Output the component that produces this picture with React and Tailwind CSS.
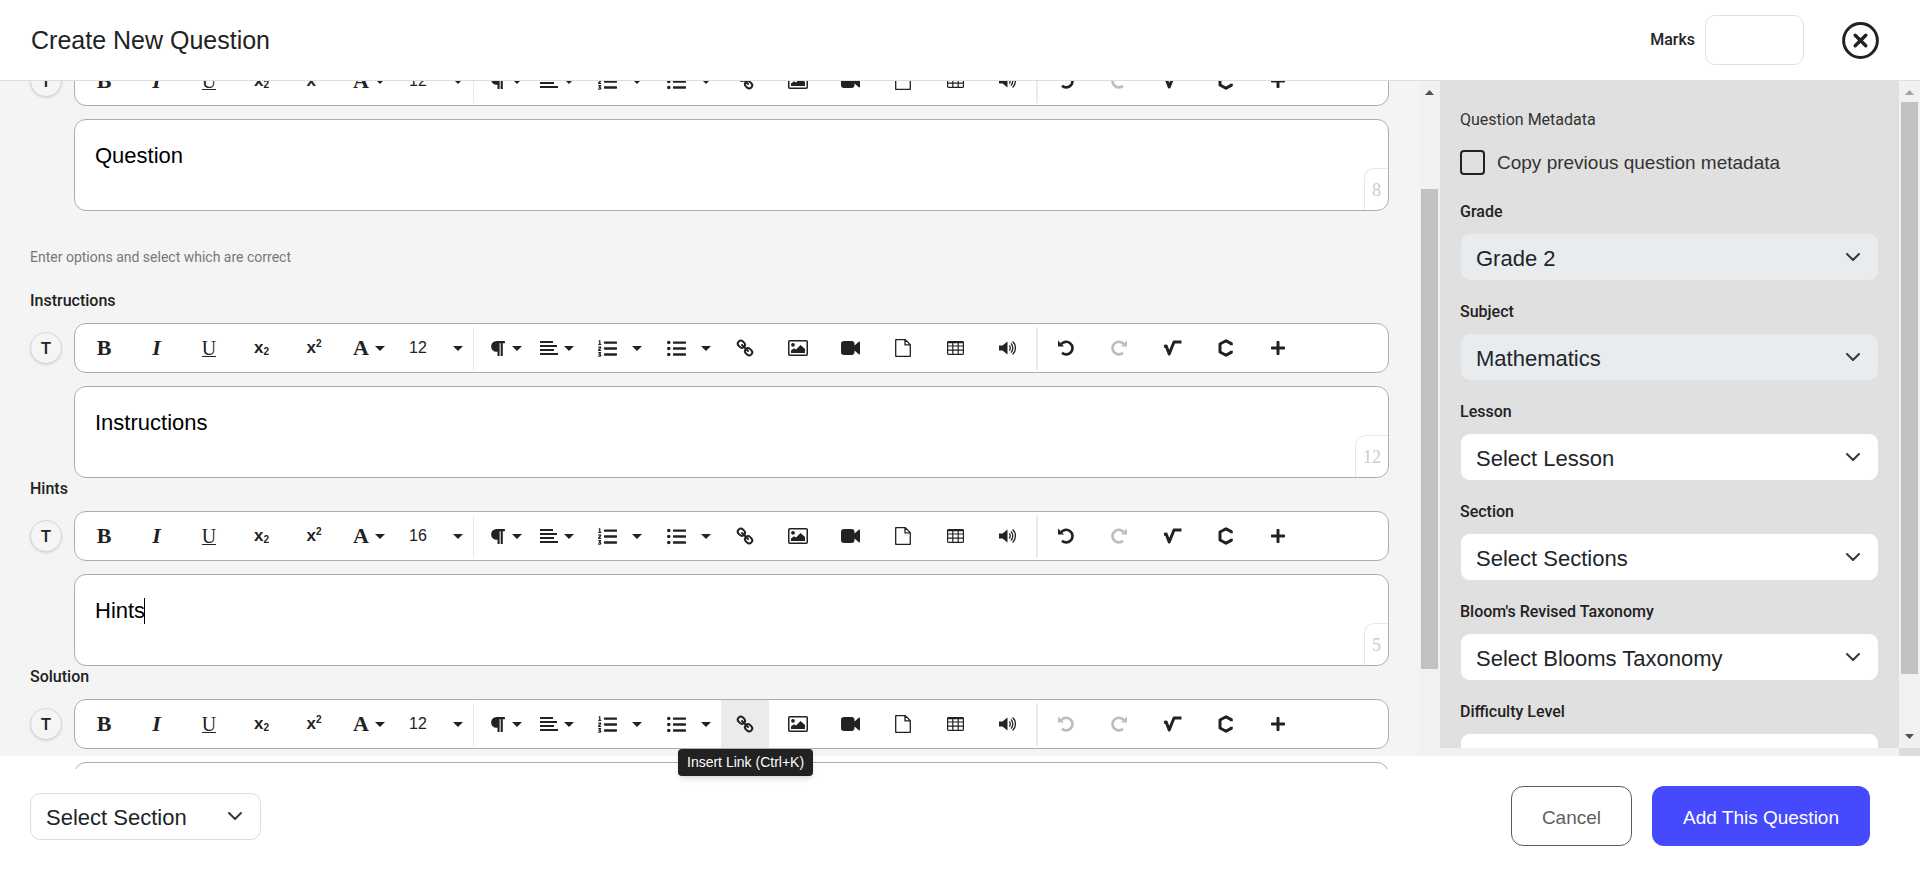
import { useId } from "react";
import { FaParagraph, FaListOl, FaListUl, FaPlus } from "react-icons/fa";

function Caret() {
  return (
    <svg className="h-[5px] w-[10px] shrink-0" viewBox="0 0 10 5" fill="currentColor" aria-hidden="true">
      <path d="M0 0h10L5 5z" />
    </svg>
  );
}

function AlignIcon() {
  return (
    <svg className="h-[14px] w-[18px]" viewBox="0 0 18 14" fill="none" stroke="currentColor" strokeWidth="2" aria-hidden="true">
      <path d="M0 1h13M0 5h17M0 9h14M0 13h18" />
    </svg>
  );
}

function LinkIcon() {
  return (
    <svg className="size-[18px]" viewBox="0 0 18 18" fill="none" stroke="currentColor" strokeWidth="2" aria-hidden="true">
      <rect x="1.6" y="2.2" width="7.6" height="6" rx="3" transform="rotate(45 5.4 5.2)" />
      <rect x="8.8" y="9.8" width="7.6" height="6" rx="3" transform="rotate(45 12.6 12.8)" />
      <path d="M6 6l6 6" strokeLinecap="round" />
    </svg>
  );
}

function ImageIcon() {
  return (
    <svg className="h-[16px] w-[20px]" viewBox="0 0 20 16" fill="currentColor" aria-hidden="true">
      <rect x="0.75" y="0.75" width="18.5" height="14.5" rx="1" fill="none" stroke="currentColor" strokeWidth="1.5" />
      <circle cx="5" cy="4.8" r="1.9" />
      <path d="M3 13v-2.400l3-2.400 2 1.400L12.500 5 17 9v4z" />
    </svg>
  );
}

function VideoIcon() {
  return (
    <svg className="h-[14px] w-[19px]" viewBox="0 0 19 14" fill="currentColor" aria-hidden="true">
      <path d="M3 0h7.500a3 3 0 0 1 3 3v1.600L17.800.8c.5-.4 1.200-.1 1.200.5v11.400c0 .6-.7.9-1.200.5l-4.300-3.800V11a3 3 0 0 1-3 3H3a3 3 0 0 1-3-3V3a3 3 0 0 1 3-3z" />
    </svg>
  );
}

function FileIcon() {
  return (
    <svg className="h-[18px] w-[16px]" viewBox="0 0 16 18" fill="none" stroke="currentColor" strokeWidth="1.300" strokeLinejoin="round" aria-hidden="true">
      <path d="M.7.7h9.600L15.300 5.600v11.700H.7zM10 .7v5.200h5.300" />
    </svg>
  );
}

function TableIcon() {
  return (
    <svg className="h-[14px] w-[17px]" viewBox="0 0 17 14" fill="none" stroke="currentColor" strokeWidth="1.200" aria-hidden="true">
      <rect x=".6" y=".6" width="15.800" height="12.800" rx="1" />
      <path d="M.6 1.200h15.800" strokeWidth="2" />
      <path d="M.6 5h15.800M.6 9.200h15.800M5.800 1v12.500M11.200 1v12.500" />
    </svg>
  );
}

function VolumeIcon() {
  return (
    <svg className="h-[16px] w-[18px]" viewBox="0 0 18 16" fill="currentColor" aria-hidden="true">
      <path d="M0 5.500h3.500L8.500 1.500v13l-5-4H0z" />
      <path d="M10.200 5.600a3.200 3.200 0 0 1 0 4.800M11.900 3.600a6 6 0 0 1 0 8.800M13.600 1.600a8.600 8.600 0 0 1 0 12.800" fill="none" stroke="currentColor" strokeWidth="1.300" />
    </svg>
  );
}

function UndoIcon() {
  return (
    <svg className="size-[16px]" viewBox="0 0 16 16" fill="none" aria-hidden="true">
      <path d="M3.200 4.200A6.300 6.300 0 1 1 4 12.800" stroke="currentColor" strokeWidth="2.700" />
      <path d="M0 .5v6h6z" fill="currentColor" />
    </svg>
  );
}

function RedoIcon() {
  return (
    <svg className="size-[16px]" viewBox="0 0 16 16" fill="none" aria-hidden="true">
      <path d="M12.800 4.200A6.300 6.300 0 1 0 12 12.800" stroke="currentColor" strokeWidth="2.700" />
      <path d="M16 .5v6h-6z" fill="currentColor" />
    </svg>
  );
}

function RootIcon() {
  return (
    <svg className="h-[16px] w-[19px]" viewBox="0 0 19 16" fill="none" stroke="currentColor" strokeWidth="3" strokeLinejoin="round" aria-hidden="true">
      <path d="M1 6.500l2.200-.5 3 8L11 2h7.500" />
    </svg>
  );
}

function ChemistryIcon() {
  return (
    <svg className="h-[18px] w-[15px]" viewBox="0 0 15 18" fill="none" stroke="currentColor" strokeWidth="3" strokeLinejoin="round" aria-hidden="true">
      <path d="M13.300 6.200V4.600L8 1.800 2 5v8l6 3.200 5.300-2.800v-1.600" />
    </svg>
  );
}

function Chevron({ className = "" }) {
  return (
    <svg className={`pointer-events-none absolute top-1/2 h-[8px] w-[14px] -translate-y-1/2 ${className}`} viewBox="0 0 14 8" fill="none" stroke="#343a40" strokeWidth="2" strokeLinecap="round" strokeLinejoin="round" aria-hidden="true">
      <path d="M1 1l6 6 6-6" />
    </svg>
  );
}

function ToolButton({ label, active, disabled, children }) {
  return (
    <button
      type="button"
      aria-label={label}
      disabled={disabled}
      className={`flex h-12 w-12 shrink-0 items-center justify-center ${active ? "bg-[#ebebeb]" : ""} ${disabled ? "text-[#bdbdbd]" : ""}`}
    >
      {children}
    </button>
  );
}

function MenuButton({ label, children }) {
  return (
    <button type="button" aria-label={label} aria-haspopup="menu" className="flex h-12 w-[52px] shrink-0 items-center justify-center gap-[6px]">
      {children}
      <Caret />
    </button>
  );
}

function ArrowButton({ label }) {
  return (
    <button type="button" aria-label={label} aria-haspopup="menu" className="flex h-12 w-3 shrink-0 items-center justify-center">
      <Caret />
    </button>
  );
}

function Toolbar({ size, linkActive, undoDisabled }) {
  return (
    <div role="toolbar" className="flex h-[50px] min-w-0 flex-1 items-center overflow-hidden rounded-xl border border-[#a8acb9] bg-white pl-[5px] text-[#222]">
      <div className="flex w-[258px] shrink-0 justify-between font-[Liberation_Serif,serif] text-[22px] leading-6">
        <ToolButton label="Bold"><b>B</b></ToolButton>
        <ToolButton label="Italic"><b><i>I</i></b></ToolButton>
        <ToolButton label="Underline">
          <span className="border-b border-current text-[20px] leading-4">U</span>
        </ToolButton>
        <ToolButton label="Subscript">
          <span className="font-[Liberation_Sans,sans-serif] text-[17px] font-bold">x</span>
          <span className="mt-2 font-[Liberation_Sans,sans-serif] text-[10px] leading-3 font-bold">2</span>
        </ToolButton>
        <ToolButton label="Superscript">
          <span className="font-[Liberation_Sans,sans-serif] text-[17px] font-bold">x</span>
          <span className="mb-2 font-[Liberation_Sans,sans-serif] text-[10px] leading-3 font-bold">2</span>
        </ToolButton>
      </div>
      <div className="mx-[5px]">
        <MenuButton label="Font"><b className="font-[Liberation_Serif,serif] text-[22px] leading-6">A</b></MenuButton>
      </div>
      <button type="button" aria-label="Font size" aria-haspopup="menu" className="flex h-12 w-[69px] shrink-0 items-center justify-between pr-[6px] pl-[9px] text-base">
        {size}
        <Caret />
      </button>
      <div className="ml-1 h-[43px] w-px shrink-0 bg-[#ebebeb]" />
      <div className="ml-[5px] flex">
        <MenuButton label="Paragraph format"><FaParagraph className="size-[17px]" /></MenuButton>
        <MenuButton label="Align"><AlignIcon /></MenuButton>
      </div>
      <div className="flex">
        <ToolButton label="Ordered list"><FaListOl className="size-[19px]" /></ToolButton>
        <ArrowButton label="Ordered list styles" />
      </div>
      <div className="ml-[9px] mr-[9px] flex">
        <ToolButton label="Unordered list"><FaListUl className="size-[19px]" /></ToolButton>
        <ArrowButton label="Unordered list styles" />
      </div>
      <div className="flex w-[311px] shrink-0 justify-between">
        <ToolButton label="Insert link" active={linkActive}><LinkIcon /></ToolButton>
        <ToolButton label="Insert image"><ImageIcon /></ToolButton>
        <ToolButton label="Insert video"><VideoIcon /></ToolButton>
        <ToolButton label="Upload file"><FileIcon /></ToolButton>
        <ToolButton label="Insert table"><TableIcon /></ToolButton>
        <ToolButton label="Insert audio"><VolumeIcon /></ToolButton>
      </div>
      <div className="mx-1 h-[43px] w-[2px] shrink-0 bg-[#ebebeb]" />
      <div className="flex w-[260px] shrink-0 justify-between">
        <ToolButton label="Undo" disabled={undoDisabled}><UndoIcon /></ToolButton>
        <ToolButton label="Redo" disabled><RedoIcon /></ToolButton>
        <ToolButton label="Math formula"><RootIcon /></ToolButton>
        <ToolButton label="Chemistry formula"><ChemistryIcon /></ToolButton>
        <ToolButton label="More"><FaPlus className="size-[16px]" /></ToolButton>
      </div>
    </div>
  );
}

function Editor({ label, ariaLabel, text, count, size = 12, focused, linkActive, undoDisabled }) {
  const id = useId();
  return (
    <div>
      {label && (
        <label htmlFor={id} className="block h-[33px] font-[Roboto,sans-serif] text-base leading-[22px] font-medium text-[#222]">
          {label}
        </label>
      )}
      <div className="flex items-center gap-3">
        <button type="button" aria-label="Text mode" className="size-8 shrink-0 rounded-full border border-[#d8d8d8] bg-[#f5f5f5] font-[Roboto,sans-serif] text-[17px] leading-4 font-medium text-[#222] shadow">
          T
        </button>
        <Toolbar size={size} linkActive={linkActive} undoDisabled={undoDisabled} />
      </div>
      <div className="relative mt-[13px] ml-11 h-[92px] overflow-hidden rounded-xl border border-[#a8acb9] bg-white">
        <textarea
          id={id}
          aria-label={ariaLabel}
          defaultValue={text}
          className="block h-full w-full resize-none overflow-hidden px-5 pt-[23px] text-[22px] leading-[26px] text-black outline-none"
        />
        {focused && <span className="absolute top-[23px] left-[69px] h-[26px] w-px bg-black" />}
        {count && (
          <span className="absolute right-0 bottom-0 h-[42px] rounded-tl-[10px] border-t border-l border-[#e8e8e8] px-[7px] pt-[9px] font-[Liberation_Serif,serif] text-[18px] leading-6 text-[#ccc]">
            {count}
          </span>
        )}
      </div>
    </div>
  );
}

function Field({ label, value, disabled }) {
  const id = useId();
  return (
    <div>
      <label htmlFor={id} className="block font-[Roboto,sans-serif] text-base leading-5 font-medium text-[#222]">{label}</label>
      <div className="relative mt-[11px]">
        <select
          id={id}
          disabled={disabled}
          className={`h-12 w-full appearance-none rounded-[10px] border border-[#e0e0e0] px-[15px] pt-[2px] text-[22px] text-[#212529] opacity-100 ${disabled ? "bg-[#e9ecef]" : "bg-white"}`}
        >
          <option>{value}</option>
        </select>
        <Chevron className="right-[19px]" />
      </div>
    </div>
  );
}

function ScrollArrow({ down, className }) {
  return (
    <svg className={`h-[5px] w-[9px] ${className}`} viewBox="0 0 9 5" fill="currentColor" aria-hidden="true">
      <path d={down ? "M0 0h9L4.500 5z" : "M0 5h9L4.500 0z"} />
    </svg>
  );
}

export default function App() {
  return (
    <div className="flex h-screen flex-col overflow-hidden bg-white font-[Liberation_Sans,Arial,sans-serif] text-[#222]">
      <header className="flex h-[81px] shrink-0 items-center border-b border-[#dedede] pr-[41px] pl-[31px]">
        <h1 className="text-[25px] leading-8">Create New Question</h1>
        <label htmlFor="marks" className="ml-auto font-[Roboto,sans-serif] text-base font-medium">Marks</label>
        <input id="marks" type="text" className="ml-[10px] h-[50px] w-[99px] rounded-[10px] border border-[#e0e0e0] px-3 text-lg outline-none" />
        <button type="button" aria-label="Close" className="ml-[38px]">
          <svg className="size-[37px]" viewBox="0 0 37 37" fill="none" stroke="#222" aria-hidden="true">
            <circle cx="18.500" cy="18.500" r="16.900" strokeWidth="3" />
            <path d="M13.200 13.200l10.600 10.600M23.800 13.200L13.200 23.800" strokeWidth="3.400" strokeLinecap="round" />
          </svg>
        </button>
      </header>

      <main className="relative flex min-h-0 flex-1 bg-[#f4f4f4]">
        <section className="relative z-10 -mb-[13px] min-w-0 flex-1 overflow-hidden pr-[30px] pl-[30px]">
          <div className="-mt-[25px]">
            <Editor ariaLabel="Question" text="Question" count="8" />
            <p className="pt-9 pb-[23px] font-[Roboto,sans-serif] text-[14px] leading-5 text-[#777]">Enter options and select which are correct</p>
            <Editor label="Instructions" text="Instructions" count="12" />
            <Editor label="Hints" text="Hints" count="5" size={16} focused />
            <Editor label="Solution" text="" linkActive undoDisabled />
          </div>
        </section>

        <div className="flex w-[21px] shrink-0 flex-col items-center bg-[#f1f1f1] pt-[9px] text-[#505050]">
          <ScrollArrow />
          <div className="mt-[94px] mb-[87px] w-[17px] flex-1 bg-[#c1c1c1]" />
        </div>

        <aside className="flex w-[480px] shrink-0 flex-col">
          <div className="flex min-h-0 flex-1">
            <div className="min-w-0 flex-1 overflow-hidden bg-[#e0e0e0] px-5 pt-[29px]">
              <h2 className="font-[Roboto,sans-serif] text-base leading-5 text-[#333]">Question Metadata</h2>
              <label className="mt-5 mb-[27px] flex items-center gap-3 text-[19px] leading-[25px] text-[#333]">
                <input type="checkbox" className="size-[25px] appearance-none rounded border-2 border-[#222]" />
                Copy previous question metadata
              </label>
              <div className="flex flex-col gap-[21px]">
                <Field label="Grade" value="Grade 2" disabled />
                <Field label="Subject" value="Mathematics" disabled />
                <Field label="Lesson" value="Select Lesson" />
                <Field label="Section" value="Select Sections" />
                <Field label="Bloom's Revised Taxonomy" value="Select Blooms Taxonomy" />
                <Field label="Difficulty Level" value="" />
              </div>
            </div>
            <div className="flex w-[21px] shrink-0 flex-col items-center bg-[#f1f1f1] pt-[9px] pb-[9px]">
              <ScrollArrow className="text-[#a3a3a3]" />
              <div className="mt-[7px] mb-[60px] w-[17px] flex-1 bg-[#c1c1c1]" />
              <ScrollArrow down className="text-[#505050]" />
            </div>
          </div>
          <div className="flex h-2 shrink-0 justify-end bg-[#f1f1f1]">
            <div className="w-[21px] bg-[#dcdcdc]" />
          </div>
        </aside>

        <div role="tooltip" className="absolute -bottom-[20px] left-[678px] z-20 rounded-sm bg-[#222] px-[9px] py-[3px] text-[14px] leading-[21px] text-white shadow-md">
          Insert Link (Ctrl+K)
        </div>
      </main>

      <footer className="flex shrink-0 items-center gap-5 bg-white pt-[30px] pr-[50px] pb-[29px] pl-[30px]">
        <div className="relative mr-auto">
          <select aria-label="Section" className="h-[47px] w-[231px] appearance-none rounded-[10px] border border-[#dedede] bg-white px-[15px] pt-[2px] text-[22px] text-[#212529]">
            <option>Select Section</option>
          </select>
          <Chevron className="right-[19px]" />
        </div>
        <button type="button" className="h-[60px] rounded-xl border border-[#5c5c5c] px-[30px] pt-1 text-[19px] text-[#5f5f5f]">Cancel</button>
        <button type="button" className="h-[60px] rounded-xl bg-[#464aff] px-[31px] pt-1 text-[19px] text-white">Add This Question</button>
      </footer>
    </div>
  );
}
